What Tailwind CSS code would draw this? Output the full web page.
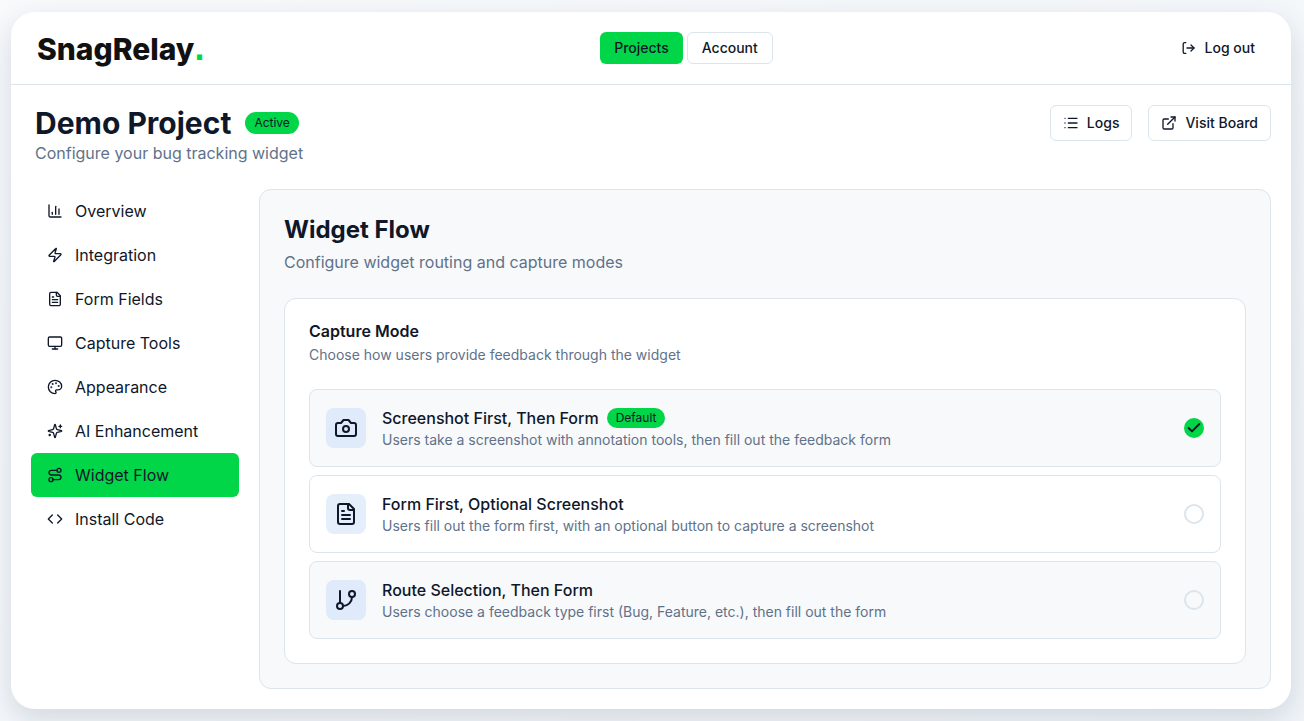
<!DOCTYPE html>
<html lang="en">
<head>
  <meta charset="UTF-8">
  <meta name="viewport" content="width=device-width, initial-scale=1.0">
  <title>Widget Flow | SnagRelay</title>
  <!-- Tailwind CSS CDN -->
  <script src="https://cdn.jsdelivr.net/npm/@tailwindcss/browser@4"></script>
</head>
<body class="min-h-screen bg-linear-to-br from-slate-50 to-slate-100 py-3 pl-[11px] pr-[13px] font-['Inter',sans-serif] text-[#0f1729]">

  <!-- App Container -->
  <div class="rounded-3xl bg-white shadow-[0_10px_30px_rgba(15,35,66,0.15)]">

    <!-- Top Bar -->
    <header class="flex items-center justify-between h-[73px] px-6 border-b border-[#dce4ec]">
      <a href="#" class="pl-[2px] text-3xl leading-8 font-extrabold text-[#111111]">SnagRelay<span class="font-['Liberation_Sans',sans-serif] text-4xl leading-8 font-bold text-[#00d647]">.</span></a>
      <nav class="flex justify-center gap-1 text-sm font-medium">
        <a href="#" class="flex items-center h-8 px-3.5 rounded-md bg-[#00d647]">Projects</a>
        <a href="#" class="flex items-center h-8 px-3.5 rounded-md border border-[#dce4ec]">Account</a>
      </nav>
      <button type="button" class="flex items-center gap-2 px-3 text-sm font-medium">
        <svg class="size-4" viewBox="0 0 16 16" fill="none" stroke="currentColor" stroke-width="1.3" stroke-linecap="round" stroke-linejoin="round"><path d="M4.8 2.6H3.6A1.4 1.4 0 0 0 2.2 4v8a1.4 1.4 0 0 0 1.4 1.4h1.2"/><path d="m10 5 3 3-3 3"/><path d="M13 8H6"/></svg>
        Log out
      </button>
    </header>

    <div class="p-5">
      <!-- Project Header -->
      <div class="flex items-start justify-between mb-6 pl-1">
        <div>
          <div class="flex items-center gap-3.5">
            <h1 class="text-3xl leading-9 font-bold">Demo Project</h1>
            <span class="px-[9px] rounded-full bg-[#00d647] text-xs leading-[22px]">Active</span>
          </div>
          <p class="text-base text-[#5f7289]">Configure your bug tracking widget</p>
        </div>
        <div class="flex gap-4 text-sm font-medium">
          <a href="#" class="flex items-center gap-2 h-9 px-3 rounded-md border border-[#dce4ec]">
            <svg class="size-4" viewBox="0 0 24 24" fill="none" stroke="currentColor" stroke-width="2" stroke-linecap="round" stroke-linejoin="round"><path d="M3 5h.01M3 12h.01M3 19h.01M8 5h13M8 12h13M8 19h13"/></svg>
            Logs
          </a>
          <a href="#" class="flex items-center gap-2 h-9 px-3 rounded-md border border-[#dce4ec]">
            <svg class="size-4" viewBox="0 0 24 24" fill="none" stroke="currentColor" stroke-width="2" stroke-linecap="round" stroke-linejoin="round"><path d="M15 3h6v6"/><path d="M10 14 21 3"/><path d="M18 13v6a2 2 0 0 1-2 2H5a2 2 0 0 1-2-2V8a2 2 0 0 1 2-2h6"/></svg>
            Visit Board
          </a>
        </div>
      </div>

      <div class="flex gap-5">
        <!-- Sidebar -->
        <nav class="w-52 shrink-0 text-base">
          <a href="#" class="flex items-center gap-3 h-11 px-4 rounded-md">
            <svg class="size-4" viewBox="0 0 24 24" fill="none" stroke="currentColor" stroke-width="2" stroke-linecap="round" stroke-linejoin="round"><path d="M3 3v16a2 2 0 0 0 2 2h16"/><path d="M18 17V9"/><path d="M13 17V5"/><path d="M8 17v-3"/></svg>
            Overview
          </a>
          <a href="#" class="flex items-center gap-3 h-11 px-4 rounded-md">
            <svg class="size-4" viewBox="0 0 24 24" fill="none" stroke="currentColor" stroke-width="2" stroke-linecap="round" stroke-linejoin="round"><path d="M4 14a1 1 0 0 1-.78-1.63l9.9-10.2a.5.5 0 0 1 .86.46l-1.92 6.02A1 1 0 0 0 13 10h7a1 1 0 0 1 .78 1.63l-9.9 10.2a.5.5 0 0 1-.86-.46l1.92-6.02A1 1 0 0 0 11 14z"/></svg>
            Integration
          </a>
          <a href="#" class="flex items-center gap-3 h-11 px-4 rounded-md">
            <svg class="size-4" viewBox="0 0 24 24" fill="none" stroke="currentColor" stroke-width="2" stroke-linecap="round" stroke-linejoin="round"><path d="M15 2H6a2 2 0 0 0-2 2v16a2 2 0 0 0 2 2h12a2 2 0 0 0 2-2V7Z"/><path d="M14 2v4a2 2 0 0 0 2 2h4"/><path d="M10 9H8"/><path d="M16 13H8"/><path d="M16 17H8"/></svg>
            Form Fields
          </a>
          <a href="#" class="flex items-center gap-3 h-11 px-4 rounded-md">
            <svg class="size-4" viewBox="0 0 24 24" fill="none" stroke="currentColor" stroke-width="2" stroke-linecap="round" stroke-linejoin="round"><rect width="20" height="14" x="2" y="3" rx="2"/><path d="M8 21h8"/><path d="M12 17v4"/></svg>
            Capture Tools
          </a>
          <a href="#" class="flex items-center gap-3 h-11 px-4 rounded-md">
            <svg class="size-4" viewBox="0 0 24 24" fill="none" stroke="currentColor" stroke-width="2" stroke-linecap="round" stroke-linejoin="round"><circle cx="13.5" cy="6.5" r=".5" fill="currentColor"/><circle cx="17.5" cy="10.5" r=".5" fill="currentColor"/><circle cx="8.5" cy="7.5" r=".5" fill="currentColor"/><circle cx="6.5" cy="12.5" r=".5" fill="currentColor"/><path d="M12 2C6.5 2 2 6.5 2 12s4.5 10 10 10c.926 0 1.648-.746 1.648-1.688 0-.437-.18-.835-.437-1.125-.29-.289-.438-.652-.438-1.125a1.64 1.64 0 0 1 1.668-1.668h1.996c3.051 0 5.555-2.503 5.555-5.554C21.965 6.012 17.461 2 12 2z"/></svg>
            Appearance
          </a>
          <a href="#" class="flex items-center gap-3 h-11 px-4 rounded-md">
            <svg class="size-4" viewBox="0 0 24 24" fill="none" stroke="currentColor" stroke-width="2" stroke-linecap="round" stroke-linejoin="round"><path d="M9.937 15.5A2 2 0 0 0 8.5 14.063l-6.135-1.582a.5.5 0 0 1 0-.962L8.5 9.936A2 2 0 0 0 9.937 8.5l1.582-6.135a.5.5 0 0 1 .963 0L14.063 8.5A2 2 0 0 0 15.5 9.937l6.135 1.581a.5.5 0 0 1 0 .964L15.5 14.063a2 2 0 0 0-1.437 1.437l-1.582 6.135a.5.5 0 0 1-.963 0z"/><path d="M20 3v4"/><path d="M22 5h-4"/><path d="M4 17v2"/><path d="M5 18H3"/></svg>
            AI Enhancement
          </a>
          <a href="#" aria-current="page" class="flex items-center gap-3 h-11 px-4 rounded-md bg-[#00d647]">
            <svg class="size-4" viewBox="0 0 24 24" fill="none" stroke="currentColor" stroke-width="2" stroke-linecap="round" stroke-linejoin="round"><circle cx="6" cy="19" r="3"/><path d="M9 19h8.5a3.5 3.5 0 0 0 0-7h-11a3.5 3.5 0 0 1 0-7H15"/><circle cx="18" cy="5" r="3"/></svg>
            Widget Flow
          </a>
          <a href="#" class="flex items-center gap-3 h-11 px-4 rounded-md">
            <svg class="size-4" viewBox="0 0 24 24" fill="none" stroke="currentColor" stroke-width="2" stroke-linecap="round" stroke-linejoin="round"><path d="m16 18 6-6-6-6"/><path d="m8 6-6 6 6 6"/></svg>
            Install Code
          </a>
        </nav>

        <!-- Settings Panel -->
        <main class="flex-1 min-w-0 p-6 rounded-xl border border-[#dce4ec] bg-[#f8f9fb]">
          <h2 class="text-2xl leading-8 font-bold">Widget Flow</h2>
          <p class="mt-1 text-base text-[#5f7289]">Configure widget routing and capture modes</p>

          <section class="mt-6 p-6 rounded-xl border border-[#dce4ec] bg-white">
            <h3 class="text-base leading-4 font-semibold">Capture Mode</h3>
            <p class="mt-1.5 text-sm text-[#5f7289]">Choose how users provide feedback through the widget</p>

            <form class="mt-6 grid gap-2">
              <label for="mode-screenshot" class="flex items-center gap-4 p-4 rounded-lg border border-[#dce4ec] bg-[#f8f9fb]">
                <span class="flex items-center justify-center size-10 rounded-lg bg-[#dfeafa]">
                  <svg class="size-6" viewBox="0 0 24 24" fill="none" stroke="currentColor" stroke-width="2" stroke-linecap="round" stroke-linejoin="round"><path d="M14.5 4h-5L7 7H4a2 2 0 0 0-2 2v9a2 2 0 0 0 2 2h16a2 2 0 0 0 2-2V9a2 2 0 0 0-2-2h-3l-2.5-3z"/><circle cx="12" cy="13" r="3"/></svg>
                </span>
                <span class="flex-1">
                  <span class="flex items-center gap-2 text-base font-medium">Screenshot First, Then Form
                    <span class="px-[9px] rounded-full bg-[#00d647] text-xs leading-5 font-normal">Default</span>
                  </span>
                  <span class="block text-sm text-[#5f7289]">Users take a screenshot with annotation tools, then fill out the feedback form</span>
                </span>
                <span class="relative flex">
                  <input type="radio" id="mode-screenshot" name="mode" checked class="appearance-none size-5 rounded-full border-2 border-[#dce4ec] checked:border-[#00d647] checked:bg-[#00d647]">
                  <svg class="absolute inset-0 m-auto size-4" viewBox="0 0 24 24" fill="none" stroke="currentColor" stroke-width="3" stroke-linecap="round" stroke-linejoin="round"><path d="M20 6 9 17l-5-5"/></svg>
                </span>
              </label>

              <label for="mode-form" class="flex items-center gap-4 p-4 rounded-lg border border-[#dce4ec]">
                <span class="flex items-center justify-center size-10 rounded-lg bg-[#e5effb]">
                  <svg class="size-6" viewBox="0 0 24 24" fill="none" stroke="currentColor" stroke-width="2" stroke-linecap="round" stroke-linejoin="round"><path d="M15 2H6a2 2 0 0 0-2 2v16a2 2 0 0 0 2 2h12a2 2 0 0 0 2-2V7Z"/><path d="M14 2v4a2 2 0 0 0 2 2h4"/><path d="M10 9H8"/><path d="M16 13H8"/><path d="M16 17H8"/></svg>
                </span>
                <span class="flex-1">
                  <span class="block text-base font-medium">Form First, Optional Screenshot</span>
                  <span class="block text-sm text-[#5f7289]">Users fill out the form first, with an optional button to capture a screenshot</span>
                </span>
                <input type="radio" id="mode-form" name="mode" class="appearance-none size-5 rounded-full border-2 border-[#dce4ec] checked:border-[#00d647] checked:bg-[#00d647]">
              </label>

              <label for="mode-route" class="flex items-center gap-4 p-4 rounded-lg border border-[#dce4ec] bg-[#f8f9fb]">
                <span class="flex items-center justify-center size-10 rounded-lg bg-[#dfeafa]">
                  <svg class="size-6" viewBox="0 0 24 24" fill="none" stroke="currentColor" stroke-width="2" stroke-linecap="round" stroke-linejoin="round"><path d="M6 3v12"/><circle cx="18" cy="6" r="3"/><circle cx="6" cy="18" r="3"/><path d="M18 9a9 9 0 0 1-9 9"/></svg>
                </span>
                <span class="flex-1">
                  <span class="block text-base font-medium">Route Selection, Then Form</span>
                  <span class="block text-sm text-[#5f7289]">Users choose a feedback type first (Bug, Feature, etc.), then fill out the form</span>
                </span>
                <input type="radio" id="mode-route" name="mode" class="appearance-none size-5 rounded-full border-2 border-[#dce4ec] checked:border-[#00d647] checked:bg-[#00d647]">
              </label>
            </form>
          </section>
        </main>
      </div>
    </div>
  </div>

</body>
</html>
